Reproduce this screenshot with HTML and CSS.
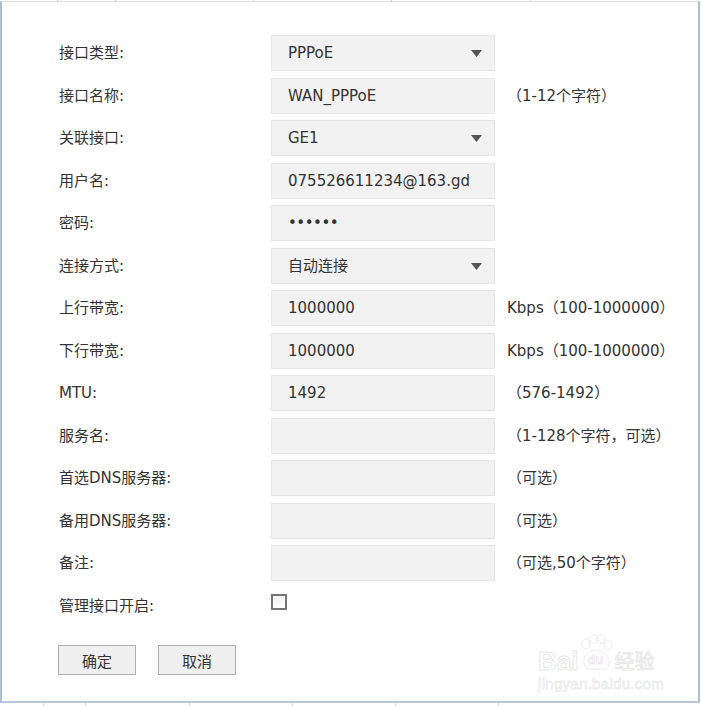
FILE: index.html
```html
<!DOCTYPE html>
<html>
<head>
    <meta charset="utf-8">
    <title>PPPoE接口设置</title>
    <link rel="stylesheet" href="styles.css">
</head>
<body>
    <div class="topline">
        <span class="tick" style="left:57px"></span>
        <span class="tick" style="left:115px"></span>
        <span class="tick" style="left:253px"></span>
        <span class="tick" style="left:391px"></span>
        <span class="tick" style="left:530px"></span>
    </div>
    <div class="frame">
        <form class="wan-form">
            <div class="row">
                <label>接口类型:</label>
                <div class="field select">PPPoE<svg class="arrow" width="11" height="7" viewBox="0 0 11 7"><polygon points="0,0 11,0 5.5,7" fill="#555"/></svg></div>
            </div>
            <div class="row">
                <label>接口名称:</label>
                <div class="field">WAN_PPPoE</div>
                <span class="hint">（1-12个字符）</span>
            </div>
            <div class="row">
                <label>关联接口:</label>
                <div class="field select">GE1<svg class="arrow" width="11" height="7" viewBox="0 0 11 7"><polygon points="0,0 11,0 5.5,7" fill="#555"/></svg></div>
            </div>
            <div class="row">
                <label>用户名:</label>
                <div class="field">075526611234@163.gd</div>
            </div>
            <div class="row">
                <label>密码:</label>
                <div class="field password">••••••</div>
            </div>
            <div class="row">
                <label>连接方式:</label>
                <div class="field select">自动连接<svg class="arrow" width="11" height="7" viewBox="0 0 11 7"><polygon points="0,0 11,0 5.5,7" fill="#555"/></svg></div>
            </div>
            <div class="row">
                <label>上行带宽:</label>
                <div class="field">1000000</div>
                <span class="hint">Kbps（100-1000000）</span>
            </div>
            <div class="row">
                <label>下行带宽:</label>
                <div class="field">1000000</div>
                <span class="hint">Kbps（100-1000000）</span>
            </div>
            <div class="row">
                <label>MTU:</label>
                <div class="field">1492</div>
                <span class="hint">（576-1492）</span>
            </div>
            <div class="row">
                <label>服务名:</label>
                <div class="field"></div>
                <span class="hint">（1-128个字符，可选）</span>
            </div>
            <div class="row">
                <label>首选DNS服务器:</label>
                <div class="field"></div>
                <span class="hint">（可选）</span>
            </div>
            <div class="row">
                <label>备用DNS服务器:</label>
                <div class="field"></div>
                <span class="hint">（可选）</span>
            </div>
            <div class="row">
                <label>备注:</label>
                <div class="field"></div>
                <span class="hint">（可选,50个字符）</span>
            </div>
            <div class="row">
                <label>管理接口开启:</label>
                <div class="check-cell"><input type="checkbox" class="check"></div>
            </div>
            <div class="buttons">
                <button type="button" class="btn">确定</button>
                <button type="button" class="btn">取消</button>
            </div>
        </form>

        <div class="watermark">
            <div class="wm-logo">
                <span class="wm-bai">Bai</span>
                <span class="wm-paw">
                    <svg width="36" height="38" viewBox="0 0 36 38">
                        <g fill="none" stroke="#ebebeb" stroke-width="1">
                            <ellipse cx="8" cy="10" rx="4" ry="5"/>
                            <ellipse cx="15" cy="5" rx="4" ry="4.5"/>
                            <ellipse cx="23" cy="5" rx="4" ry="4.5"/>
                            <ellipse cx="30" cy="11" rx="4" ry="5"/>
                            <path d="M6 30 C4 22 12 16 18 16 C25 16 33 22 31 30 C30 35 24 36 18 35 C12 36 7 35 6 30 Z"/>
                        </g>
                    </svg>
                    <span class="wm-du">du</span>
                </span>
                <span class="wm-jy">经验</span>
            </div>
            <div class="wm-url">jingyan.baidu.com</div>
        </div>
    </div>
    <div class="bottomline">
        <span class="tick" style="left:43px"></span>
        <span class="tick" style="left:85px"></span>
        <span class="tick" style="left:189px"></span>
        <span class="tick" style="left:292px"></span>
        <span class="tick" style="left:395px"></span>
        <span class="tick" style="left:498px"></span>
    </div>
</body>
</html>
```

FILE: styles.css
```css
body {
    margin: 0;
    background: #fff;
    font-family: "DejaVu Sans", "Noto Sans CJK SC", sans-serif;
    font-size: 15px;
    color: #333;
    width: 701px;
    overflow: hidden;
}
.topline {
    position: relative;
    height: 1px;
    margin-top: 1px;
    background: #dfdfdf;
}
.topline .tick {
    position: absolute;
    top: -1px;
    width: 1px;
    height: 2px;
    background: #cfcfcf;
}
.frame {
    position: relative;
    width: 696px;
    height: 699px;
    border-left: 2px solid #a9bfd4;
    border-right: 2px solid #a9bfd4;
    border-bottom: 2px solid #b6c8d9;
}
.wan-form {
    padding: 33px 0 0 57px;
}
.row {
    display: grid;
    grid-template-columns: 212px 224px auto;
    align-items: center;
    height: 42.5px;
    align-content: start;
}
.row label {
    height: 36px;
    line-height: 36px;
}
.field {
    position: relative;
    box-sizing: border-box;
    height: 36px;
    line-height: 34px;
    padding-left: 16px;
    background: #f2f2f2;
    border: 1px solid #e6e6e6;
    white-space: nowrap;
}
.field .arrow {
    position: absolute;
    right: 12px;
    top: 14px;
}
.password {
    letter-spacing: -0.5px;
}
.hint {
    padding-left: 12px;
    line-height: 36px;
    white-space: nowrap;
}
.check-cell {
    height: 36px;
}
.check {
    -webkit-appearance: none;
    appearance: none;
    display: block;
    box-sizing: border-box;
    width: 16px;
    height: 16px;
    margin: 6px 0 0 0;
    border: 2px solid #767676;
    background: linear-gradient(#f2f2f2, #fff);
}
.buttons {
    display: flex;
    gap: 22px;
    margin: 15px 0 0 -1px;
}
.btn {
    box-sizing: border-box;
    width: 78px;
    height: 30px;
    padding: 0;
    font-family: "DejaVu Sans", "Noto Sans CJK SC", sans-serif;
    font-size: 15px;
    color: #333;
    background: #f0f0f0;
    border: 1px solid #adadad;
    border-radius: 0;
}
.watermark {
    position: absolute;
    left: 536px;
    top: 628px;
    color: #fff;
    pointer-events: none;
}
.wm-logo {
    display: flex;
    align-items: flex-end;
    height: 42px;
}
.wm-bai {
    font-family: "Liberation Sans", sans-serif;
    font-size: 26px;
    font-weight: bold;
    line-height: 22px;
    color: #fff;
    -webkit-text-stroke: 1px #e9e9e9;
}
.wm-paw {
    position: relative;
    width: 36px;
    height: 40px;
}
.wm-paw svg {
    position: absolute;
    left: 0;
    top: 2px;
}
.wm-du {
    position: absolute;
    left: 9px;
    top: 20px;
    font-family: "Liberation Sans", sans-serif;
    font-size: 13px;
    font-weight: bold;
    color: #fff;
    -webkit-text-stroke: 0.8px #e9e9e9;
}
.wm-jy {
    font-family: "Noto Sans CJK SC", sans-serif;
    font-size: 20px;
    line-height: 22px;
    color: #fff;
    -webkit-text-stroke: 1px #e9e9e9;
}
.wm-url {
    margin-top: 3px;
    font-family: "Liberation Sans", sans-serif;
    font-size: 15px;
    color: #fff;
    -webkit-text-stroke: 0.8px #ebebeb;
    letter-spacing: 0.3px;
}
.bottomline {
    position: relative;
    height: 3px;
}
.bottomline .tick {
    position: absolute;
    top: 0;
    width: 1px;
    height: 3px;
    background: #d6d6d6;
}
```
